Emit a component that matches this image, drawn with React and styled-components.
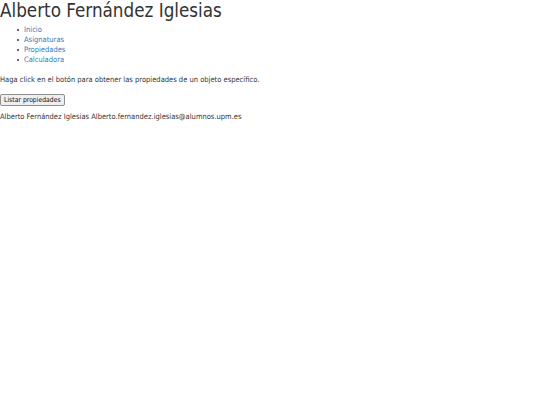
import React from 'react'
import styled, { createGlobalStyle } from 'styled-components'

const GlobalStyle = createGlobalStyle`
  body {
    margin: 0;
    background: #fff;
    font-family: "DejaVu Sans Condensed", "DejaVu Sans", sans-serif;
    font-size: 7.5px;
    line-height: 10px;
    color: #333;
  }
`

function App() {
    return (
        <Page>
            <GlobalStyle />
            <Title>Alberto Fernández Iglesias</Title>
            <NavList>
                <NavItem><NavLink href="#">Inicio</NavLink></NavItem>
                <NavItem><NavLink href="#">Asignaturas</NavLink></NavItem>
                <NavItem><NavLink href="#">Propiedades</NavLink></NavItem>
                <NavItem><NavLink href="#">Calculadora</NavLink></NavItem>
            </NavList>
            <Text>Haga click en el botón para obtener las propiedades de un objeto específico.</Text>
            <ListBtn>Listar propiedades</ListBtn>
            <Footer>Alberto Fernández Iglesias Alberto.fernandez.iglesias@alumnos.upm.es</Footer>
        </Page>
    )
}

export default App

const Page = styled.div`
    width: 540px;
`

const Title = styled.h1`
    margin: 0 0 3px 0;
    font-size: 18.7px;
    font-weight: normal;
    line-height: 22px;
`

const NavList = styled.ul`
    margin: 0 0 10px 0;
    padding: 0;
    list-style: none;
`

const NavItem = styled.li`
    display: flex;
    align-items: center;
    gap: 5px;
    padding-left: 17px;
    &::before {
        content: '';
        width: 2px;
        height: 2px;
        border-radius: 50%;
        background: #333;
    }
`

const NavLink = styled.a`
    color: #337ab7;
    text-decoration: none;
`

const Text = styled.p`
    margin: 0 0 9px 0;
`

const ListBtn = styled.button`
    display: block;
    height: 12px;
    padding: 0 3px;
    font-family: "DejaVu Sans Condensed", "DejaVu Sans", sans-serif;
    font-size: 6.8px;
    line-height: 10px;
    background: #efefef;
    border: 1px solid #8f8f8f;
    border-radius: 2px;
    color: #111;
`

const Footer = styled.p`
    margin: 6px 0 0 0;
`
